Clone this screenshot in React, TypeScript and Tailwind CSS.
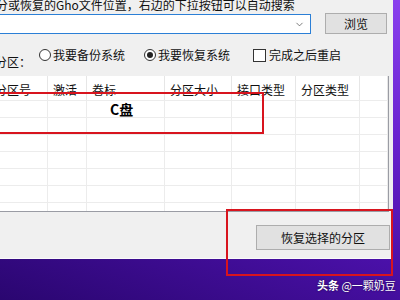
import { ChevronDown } from 'lucide-react'

const COLUMNS = [
  { label: '分区号', w: 'w-[58px]' },
  { label: '激活', w: 'w-[39px]' },
  { label: '卷标', w: 'w-[78px]' },
  { label: '分区大小', w: 'w-[67px]' },
  { label: '接口类型', w: 'w-[64px]' },
  { label: '分区类型', w: 'w-[64px]' },
  { label: '', w: 'flex-1' },
]

const ROWS = [0, 1, 2, 3, 4, 5, 6]

function Radio({ checked, label }: { checked?: boolean; label: string }) {
  return (
    <div className="flex items-center gap-[2px]">
      <span className="w-[12px] h-[12px] rounded-full border border-[#333] bg-white flex items-center justify-center">
        {checked && <span className="w-[6px] h-[6px] rounded-full bg-[#222]" />}
      </span>
      <span className="leading-[14px]">{label}</span>
    </div>
  )
}

export default function App() {
  return (
    <div className="relative w-[400px] h-[300px] overflow-hidden bg-[linear-gradient(20deg,#2a0670_0%,#4a10a8_40%,#6a24d0_70%,#8a40ee_100%)] font-['Noto_Sans_CJK_SC',sans-serif] text-[12px] text-[#111]">
      {/* dialog window, left part cut off */}
      <div className="-ml-[10px] w-[403px] h-[259px] bg-[#f0f0f0] border-b border-[#fafafa] flex flex-col">
        <div className="h-[13px] pl-[6px] leading-[12px] whitespace-nowrap -mt-[1px]">
          分或恢复的Gho文件位置，右边的下拉按钮可以自动搜索
        </div>

        {/* path combobox + browse */}
        <div className="flex items-start mt-[1px] h-[21px]">
          <div className="ml-[4px] mt-[1px] w-[317px] h-[20px] bg-white border border-[#2b7fd6] flex items-center justify-end pr-[5px]">
            <ChevronDown className="w-[11px] h-[11px] text-[#444]" strokeWidth={1.5} />
          </div>
          <button
            type="button"
            className="ml-[14px] w-[62px] h-[21px] bg-[#e1e1e1] border border-[#adadad] flex items-center justify-center leading-none"
          >
            浏览
          </button>
        </div>

        {/* restore options */}
        <div className="flex items-start mt-[14px] h-[28px]">
          <span className="ml-[5px] w-[36px] mt-[8px] leading-[12px]">分区：</span>
          <div className="ml-[8px]">
            <Radio label="我要备份系统" />
          </div>
          <div className="ml-[19px]">
            <Radio checked label="我要恢复系统" />
          </div>
          <div className="ml-[23px] flex items-center gap-[3px]">
            <span className="w-[13px] h-[13px] border border-[#333] bg-white" />
            <span className="leading-[14px]">完成之后重启</span>
          </div>
        </div>

        {/* partition list */}
        <div className="w-[399px] h-[136px] bg-white border-r border-b border-[#9a9ca4] flex flex-col overflow-hidden">
          <div className="flex h-[24px] shrink-0">
            {COLUMNS.map((c, i) => (
              <div
                key={i}
                className={`${c.w} shrink-0 border-r border-[#e6e6e6] pl-[5px] pt-[7px] leading-[14px] whitespace-nowrap`}
              >
                {c.label}
              </div>
            ))}
          </div>
          {ROWS.map(r => (
            <div key={r} className="flex h-[17px] shrink-0 border-t border-[#ececec]">
              {COLUMNS.map((c, i) => (
                <div key={i} className={`${c.w} shrink-0 border-r border-[#ececec]`} />
              ))}
            </div>
          ))}
        </div>

        <div className="flex justify-end pr-[3px] pt-[13px]">
          <button
            type="button"
            className="w-[134px] h-[25px] bg-[#e1e1e1] border border-[#adadad] flex items-center justify-center leading-none"
          >
            恢复选择的分区
          </button>
        </div>
      </div>

      {/* annotations */}
      <div className="absolute left-[-10px] top-[92px] w-[274px] h-[42px] border-2 border-[#d8141e]" />
      <div className="absolute left-[110px] top-[101px] text-[14px] font-bold leading-[16px] text-black">C盘</div>
      <div className="absolute left-[226px] top-[209px] w-[167px] h-[67px] border-2 border-[#d8141e]" />

      {/* watermark */}
      <div className="absolute left-[317px] top-[279px] text-[11px] leading-[13px] text-white whitespace-nowrap [text-shadow:0_0_2px_rgba(0,0,0,0.6)]">
        <span className="font-bold">头条</span> @一颗奶豆
      </div>
    </div>
  )
}
